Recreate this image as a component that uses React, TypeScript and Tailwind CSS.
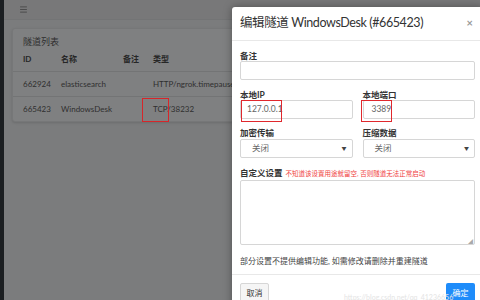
import { Menu } from 'lucide-react';

const rows = [
  { id: '662924', name: 'elasticsearch', note: '', type: 'HTTP/ngrok.timepause.' },
  { id: '665423', name: 'WindowsDesk', note: '', type: 'TCP/38232' },
];

function Label({ children }: { children: React.ReactNode }) {
  return <div className="text-[8.5px] font-bold text-[#333] leading-[10px]">{children}</div>;
}

function Select() {
  return (
    <div className="mt-[1px] h-[19px] border border-[#d6d6d6] rounded-[2px] flex items-center justify-between pl-[11px] pr-[5px] text-[8.5px] text-[#666]">
      <span>关闭</span>
      <span className="text-[5px] text-[#444]">▼</span>
    </div>
  );
}

export default function App() {
  return (
    <div
      className="relative w-[480px] h-[300px] overflow-hidden bg-[#7b7c7d]"
      style={{ fontFamily: 'Lato, "Noto Sans CJK SC", sans-serif' }}
    >
      <div className="flex h-full">
        <div className="w-[4px] bg-[#1b1e21]" />
        <div className="flex-1 flex flex-col">
          <div className="h-[20px] bg-[#787879] flex items-center pl-[15px] border-b border-[#737475]">
            <Menu size={9} className="text-[#4a4a4a]" strokeWidth={2.5} />
          </div>
          <div className="px-[8px] pt-[8px]">
            <div className="w-[260px] bg-[#7f8081] rounded-[3px] border border-[#767778] shadow-sm text-[8px]">
              <div className="px-[10px] pt-[6px] pb-[4px] text-[9px] leading-[14px] text-[#2e2e2e]">隧道列表</div>
              <div className="flex px-[10px] pb-[6px] font-bold text-[#262626] leading-[12px]">
                <span className="w-[38px]">ID</span>
                <span className="w-[62px]">名称</span>
                <span className="w-[30px]">备注</span>
                <span>类型</span>
              </div>
              {rows.map((r) => (
                <div key={r.id} className="flex items-center px-[10px] h-[25px] border-t border-[#737475] text-[#2f2f2f] leading-[12px]">
                  <span className="w-[38px]">{r.id}</span>
                  <span className="w-[62px]">{r.name}</span>
                  <span className="w-[30px]">{r.note}</span>
                  <span className="relative whitespace-nowrap">
                    {r.type}
                    {r.id === '665423' && (
                      <span className="absolute left-[-11px] top-[-5px] w-[27px] h-[24px] border border-[#d6262a]" />
                    )}
                  </span>
                </div>
              ))}
            </div>
          </div>
        </div>
      </div>

      <div className="absolute left-[232px] top-[7px] w-[251px] h-[310px] bg-white rounded-[3px] shadow-[0_0_8px_rgba(0,0,0,0.35)]">
        <div className="flex items-center justify-between h-[34px] px-[8px] border-b border-[#e8e8e8]">
          <span className="text-[12.5px] tracking-[-0.4px] text-[#333] whitespace-nowrap">编辑隧道 WindowsDesk (#665423)</span>
          <span className="text-[11px] font-bold text-[#999] mr-[2px]">×</span>
        </div>
        <div className="px-[8px] pt-[10px]">
          <Label>备注</Label>
          <div className="h-[19px] border border-[#d6d6d6] rounded-[2px]" />
          <div className="flex gap-[10px] mt-[10px]">
            <div className="flex-1">
              <Label>本地IP</Label>
              <div className="relative h-[19px] border border-[#d6d6d6] rounded-[2px] flex items-center pl-[6px] text-[8.5px] text-[#666]">
                127.0.0.1
                <span className="absolute left-[0px] top-[-1px] w-[41px] h-[22px] border border-[#e0282d]" />
              </div>
            </div>
            <div className="flex-1">
              <Label>本地端口</Label>
              <div className="relative h-[19px] border border-[#d6d6d6] rounded-[2px] flex items-center pl-[8px] text-[8.5px] text-[#666]">
                3389
                <span className="absolute left-[-3px] top-[-1px] w-[31px] h-[22px] border border-[#e0282d]" />
              </div>
            </div>
          </div>
          <div className="flex gap-[10px] mt-[9px]">
            <div className="flex-1">
              <Label>加密传输</Label>
              <Select />
            </div>
            <div className="flex-1">
              <Label>压缩数据</Label>
              <Select />
            </div>
          </div>
          <div className="mt-[10px] flex items-end gap-[3px]">
            <span className="text-[8.5px] font-bold text-[#333] leading-[10px]">自定义设置</span>
            <span className="text-[6.5px] text-[#f0413e] leading-[9px]">不知道该设置用途就留空, 否则隧道无法正常启动</span>
          </div>
          <div className="relative mt-[2px] h-[65px] border border-[#d6d6d6] rounded-[2px]">
            <span className="absolute right-[1px] bottom-[0px] text-[5px] text-[#aaa] leading-none">◢</span>
          </div>
          <div className="mt-[10px] text-[8px] leading-[12px] text-[#444]">部分设置不提供编辑功能, 如需修改请删除并重建隧道</div>
        </div>
        <div className="mt-[7px] border-t border-[#e8e8e8] px-[8px] pt-[8px] flex justify-between">
          <button className="h-[20px] w-[29px] border border-[#d6d6d6] rounded-[2px] bg-[#f5f5f5] text-[8px] text-[#333]">取消</button>
          <button className="h-[20px] w-[29px] rounded-[2px] bg-[#1e8cfa] text-[8px] text-white">确定</button>
        </div>
        <div className="absolute left-[112px] top-[285px] text-[7px] text-[#e4e4e4] whitespace-nowrap">https://blog.csdn.net/qq_41236656</div>
      </div>
    </div>
  );
}
